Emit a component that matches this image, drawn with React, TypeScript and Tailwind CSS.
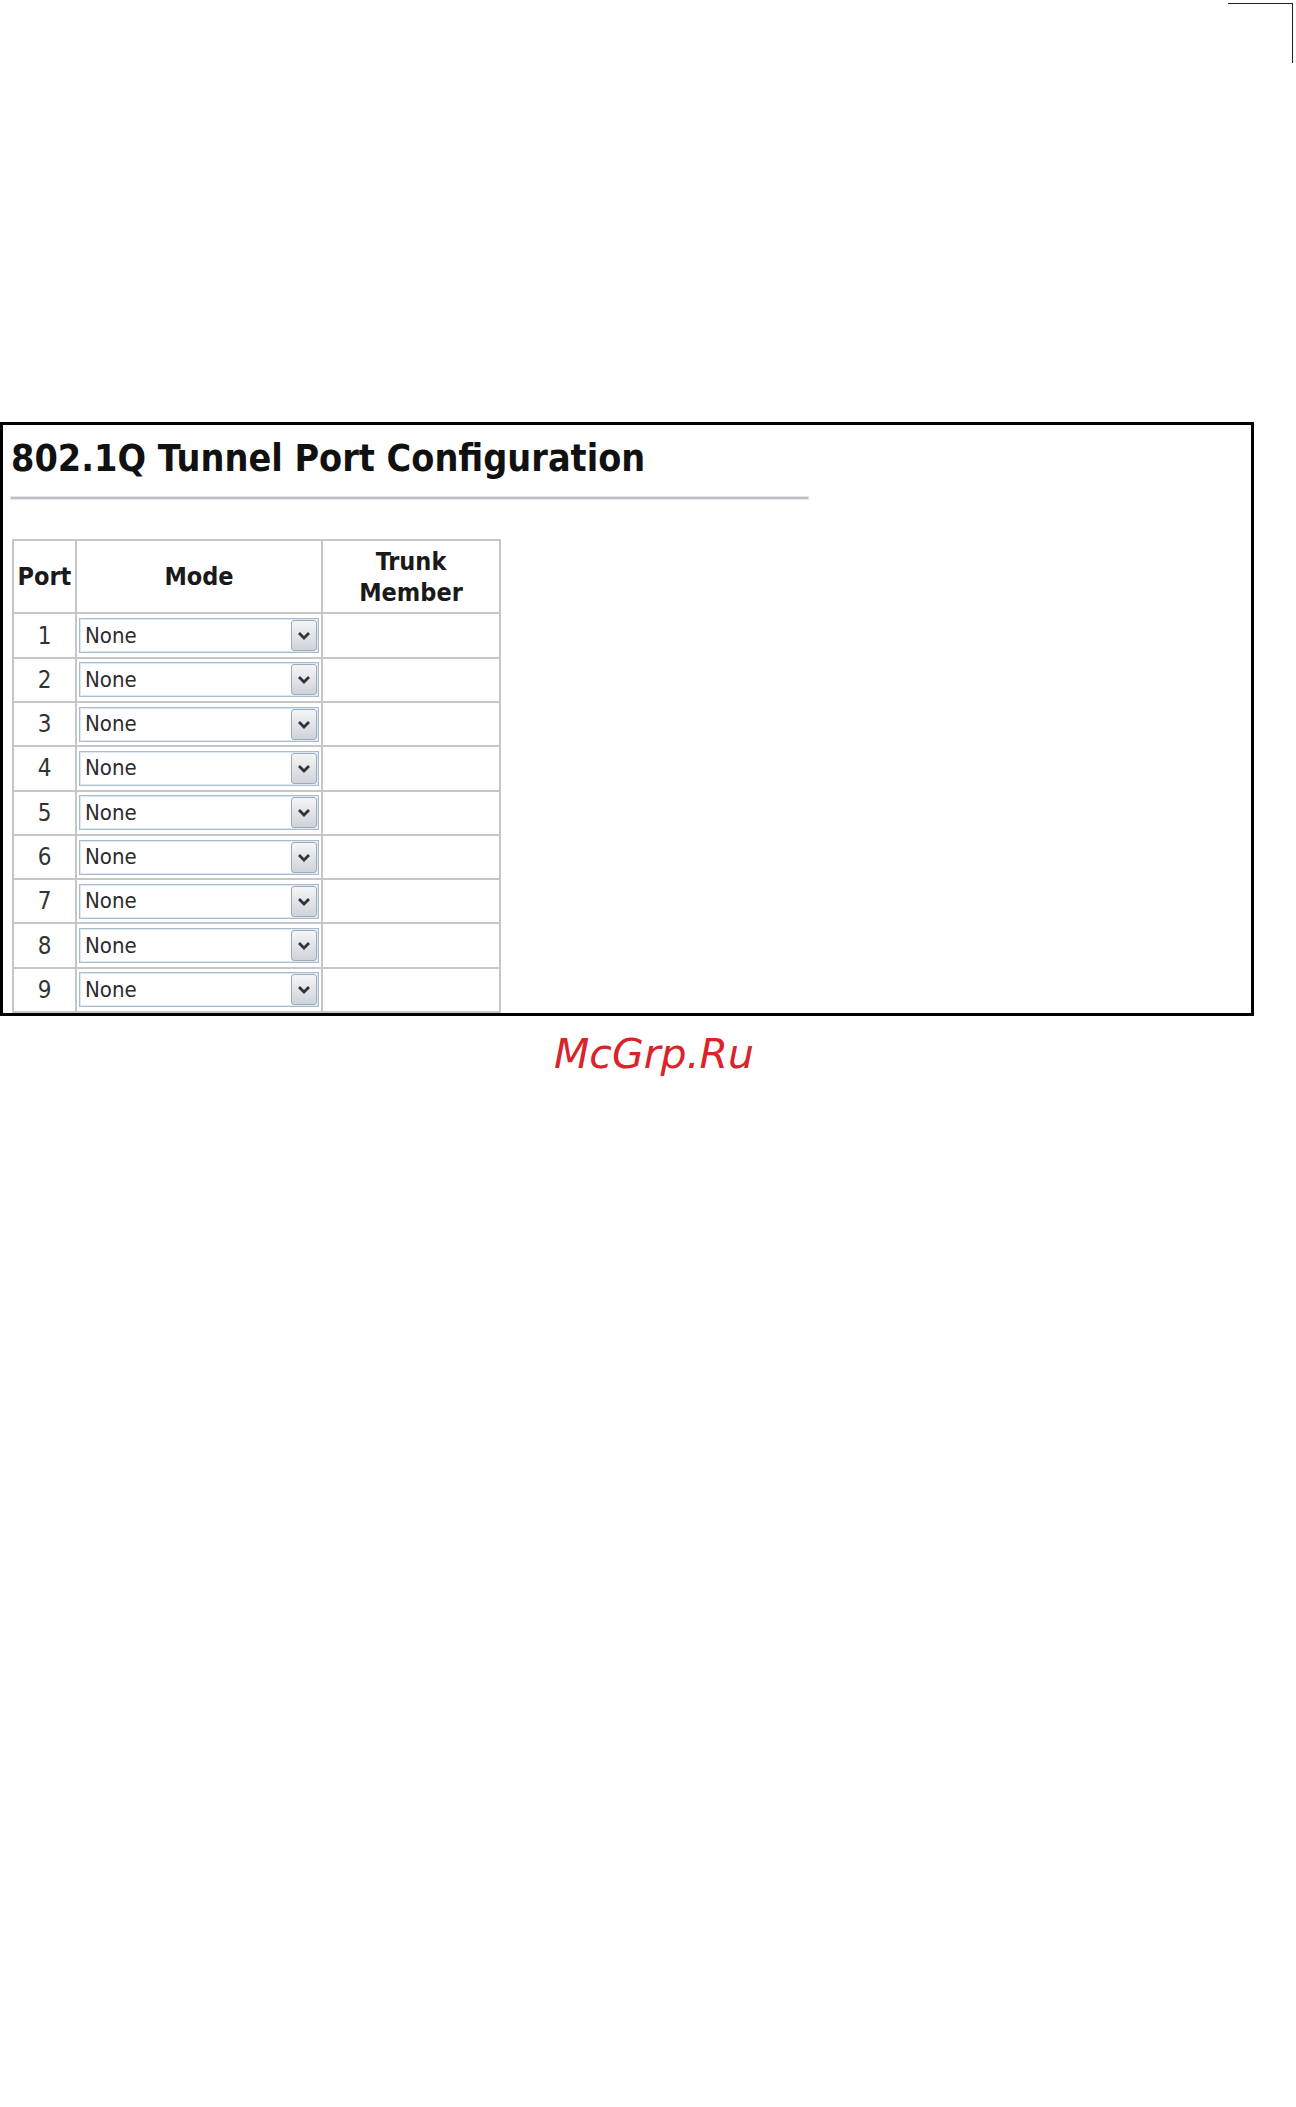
const ports = [1, 2, 3, 4, 5, 6, 7, 8, 9];

function ModeSelect() {
  return (
    <div className="flex h-[35px] w-full items-center border border-[#a7bccf] bg-white pl-[5px] pr-[1px] shadow-[inset_0_0_0_1px_#dfe8f0]">
      <span className="flex-1 text-[22px] leading-none text-[#2b2b2b]">None</span>
      <div className="flex h-[31px] w-[26px] items-center justify-center rounded-[3px] border border-[#9eabb8] bg-gradient-to-b from-[#f4f5f6] to-[#cfd4da]">
        <svg width="14" height="9" viewBox="0 0 14 9" fill="none">
          <path d="M2 2l5 5 5-5" stroke="#333" strokeWidth="2.8" />
        </svg>
      </div>
    </div>
  );
}

export default function App() {
  return (
    <div className="min-h-[2107px] bg-white font-['DejaVu_Sans_Condensed','DejaVu_Sans',sans-serif]">
      {/* crop mark in the page corner */}
      <div className="flex justify-end pt-[3px] pr-[3px]">
        <div className="h-[60px] w-[65px] border-t border-r border-[#231f20]" />
      </div>

      <div className="mt-[359px] w-[1254px] border-[3px] border-black">
        <h1 className="pt-[15px] pl-[8px] text-[37.4px] font-bold leading-none text-[#111]">
          802.1Q Tunnel Port Configuration
        </h1>
        <div className="mt-[20px] ml-[8px] h-[2px] w-[797px] bg-[#bfbfc6] shadow-[0_0_1px_1px_#e4e4e8]" />

        <table className="mt-[40px] ml-[9px] border-collapse border-2 border-[#c6c6c6] text-[#1a1a1a]">
          <thead>
            <tr className="h-[73px] text-[25px] font-bold leading-[31px]">
              <th className="w-[63px] border-2 border-[#c6c6c6] px-0">Port</th>
              <th className="w-[246px] border-2 border-[#c6c6c6]">Mode</th>
              <th className="w-[178px] border-2 border-[#c6c6c6]">
                Trunk
                <br />
                Member
              </th>
            </tr>
          </thead>
          <tbody>
            {ports.map((p) => (
              <tr key={p} className="h-[44.3px]">
                <td className="border-2 border-[#c6c6c6] text-center text-[24px] leading-none text-[#333]">
                  {p}
                </td>
                <td className="border-2 border-[#c6c6c6] px-[2px]">
                  <ModeSelect />
                </td>
                <td className="border-2 border-[#c6c6c6]" />
              </tr>
            ))}
          </tbody>
        </table>
      </div>

      <div className="pt-[8px] pl-[554px]">
        <span className="font-['DejaVu_Sans',sans-serif] text-[41px] italic text-[#d8242a]">McGrp.Ru</span>
      </div>
    </div>
  );
}
